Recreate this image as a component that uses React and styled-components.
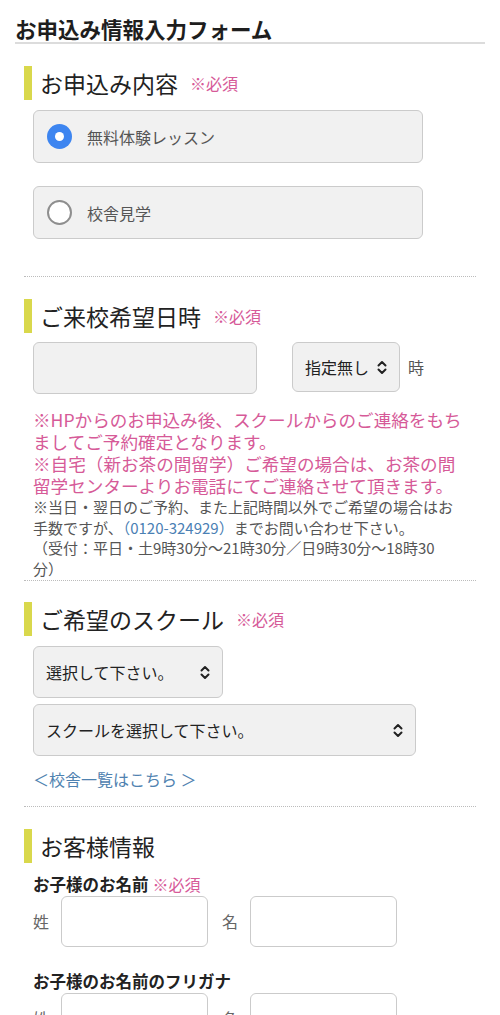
import styled, { createGlobalStyle } from "styled-components"

const GlobalStyle = createGlobalStyle`
  html, body {
    margin: 0;
    padding: 0;
    background: #fff;
  }
  body {
    font-family: "Noto Sans CJK JP", "Noto Sans", sans-serif;
    color: #333;
  }
`

const PINK = "#d65a98"

const Page = styled.div`
  width: 500px;
  padding-bottom: 40px;
`
const Title = styled.h1`
  margin: 0 15px;
  padding-top: 16px;
  font-size: 21.5px;
  line-height: 26px;
  font-weight: 700;
  color: #1e1e1e;
  border-bottom: 2px solid #dcdcdc;
`
const Sections = styled.div`
  padding: 0 24px;
`
const Section = styled.section`
  padding: ${p => p.$top}px 0 ${p => p.$bottom}px;
  border-bottom: ${p => (p.$last ? "none" : "1px dotted #bcbcbc")};
`
const Heading = styled.h2`
  margin: 0;
  display: flex;
  align-items: center;
  height: 34px;
  border-left: 8px solid #d9d84c;
  padding-left: 8px;
  font-size: 23px;
  font-weight: 400;
  color: #222;
`
const Required = styled.span`
  margin-left: 12px;
  font-size: 16px;
  color: ${PINK};
`
const Body = styled.div`
  padding-left: 9px;
  margin-top: ${p => p.$top || 0}px;
`
const RadioBox = styled.label`
  display: flex;
  align-items: center;
  box-sizing: border-box;
  width: 390px;
  height: 53px;
  margin-bottom: ${p => p.$gap || 0}px;
  padding-left: 13px;
  background: #f1f1f1;
  border: 1.5px solid #cbcbcb;
  border-radius: 6px;
  font-size: 16px;
  color: #555;
`
const RadioDot = styled.span`
  box-sizing: border-box;
  width: 25px;
  height: 25px;
  margin-right: 15px;
  border-radius: 50%;
  background: ${p => (p.$on ? "#3d85f0" : "#fff")};
  border: ${p => (p.$on ? "none" : "2px solid #8e8e8e")};
  display: flex;
  align-items: center;
  justify-content: center;
  &::after {
    content: "";
    display: ${p => (p.$on ? "block" : "none")};
    width: 9px;
    height: 9px;
    border-radius: 50%;
    background: #fff;
  }
`
const Row = styled.div`
  display: flex;
  align-items: flex-start;
  margin-top: ${p => p.$top || 0}px;
`
const TextBox = styled.div`
  box-sizing: border-box;
  width: ${p => p.$w}px;
  height: ${p => p.$h || 52}px;
  background: ${p => (p.$white ? "#fff" : "#f1f1f1")};
  border: 1.5px solid #cbcbcb;
  border-radius: 6px;
`
const Select = styled.div`
  box-sizing: border-box;
  display: flex;
  align-items: center;
  justify-content: space-between;
  width: ${p => p.$w}px;
  height: ${p => p.$h || 52}px;
  margin-left: ${p => p.$ml || 0}px;
  padding: 0 12px 0 12px;
  background: #f1f1f1;
  border: 1.5px solid #cbcbcb;
  border-radius: 6px;
  font-size: 16px;
  color: #222;
`
const Unit = styled.span`
  margin-left: 8px;
  font-size: 16px;
  color: #555;
  line-height: 50px;
`
const Notes = styled.div`
  margin-top: 15px;
  white-space: nowrap;
`
const PinkNote = styled.p`
  margin: 0;
  font-size: 17.6px;
  line-height: 22px;
  color: ${PINK};
`
const GrayNote = styled.p`
  margin: 0;
  font-size: 15px;
  line-height: 20.5px;
  color: #555;
`
const Phone = styled.span`
  color: #4a80b4;
`
const Link = styled.a`
  display: block;
  margin-top: 12px;
  font-size: 16px;
  line-height: 22px;
  color: #4f82b0;
  text-decoration: none;
`
const FieldLabel = styled.div`
  margin-top: ${p => p.$top}px;
  font-size: 16.5px;
  line-height: 22px;
  font-weight: 700;
  color: #222;
  ${Required} {
    margin-left: 4px;
    font-weight: 400;
  }
`
const NameTag = styled.span`
  width: ${p => p.$w}px;
  font-size: 16px;
  color: #666;
  line-height: 51px;
  margin-left: ${p => p.$ml || 0}px;
`

function Chevron() {
  return (
    <svg width="10" height="15" viewBox="0 0 10 15" fill="none" stroke="#222" strokeWidth="2" strokeLinecap="round" strokeLinejoin="round">
      <path d="M1.5 5.5 L5 2 L8.5 5.5" />
      <path d="M1.5 9.5 L5 13 L8.5 9.5" />
    </svg>
  )
}

function NameRow({ top }) {
  return (
    <Row $top={top}>
      <NameTag $w={28}>姓</NameTag>
      <TextBox $w={147} $h={51} $white />
      <NameTag $w={28} $ml={14}>名</NameTag>
      <TextBox $w={147} $h={51} $white />
    </Row>
  )
}

export default function App() {
  return (
    <Page>
      <GlobalStyle />
      <Title>お申込み情報入力フォーム</Title>
      <Sections>
        <Section $top={22} $bottom={37}>
          <Heading>お申込み内容<Required>※必須</Required></Heading>
          <Body $top={10}>
            <RadioBox $gap={23}><RadioDot $on />無料体験レッスン</RadioBox>
            <RadioBox><RadioDot />校舎見学</RadioBox>
          </Body>
        </Section>

        <Section $top={22} $bottom={1}>
          <Heading>ご来校希望日時<Required>※必須</Required></Heading>
          <Body>
            <Row $top={9}>
              <TextBox $w={224} />
              <Select $w={108} $h={50} $ml={35}>指定無し<Chevron /></Select>
              <Unit>時</Unit>
            </Row>
            <Notes>
              <PinkNote>※HPからのお申込み後、スクールからのご連絡をもち<br />ましてご予約確定となります。</PinkNote>
              <PinkNote>※自宅（新お茶の間留学）ご希望の場合は、お茶の間<br />留学センターよりお電話にてご連絡させて頂きます。</PinkNote>
              <GrayNote>
                ※当日・翌日のご予約、また上記時間以外でご希望の場合はお<br />
                手数ですが、<Phone>（0120-324929）</Phone>までお問い合わせ下さい。<br />
                （受付：平日・土9時30分～21時30分／日9時30分～18時30<br />
                分）
              </GrayNote>
            </Notes>
          </Body>
        </Section>

        <Section $top={21} $bottom={16}>
          <Heading>ご希望のスクール<Required>※必須</Required></Heading>
          <Body $top={10}>
            <Select $w={190}>選択して下さい。<Chevron /></Select>
            <Row $top={6}>
              <Select $w={383}>スクールを選択して下さい。<Chevron /></Select>
            </Row>
            <Link href="#">＜校舎一覧はこちら ＞</Link>
          </Body>
        </Section>

        <Section $top={22} $bottom={0} $last>
          <Heading>お客様情報</Heading>
          <Body>
            <FieldLabel $top={10}>お子様のお名前<Required>※必須</Required></FieldLabel>
            <NameRow top={1} />
            <FieldLabel $top={23}>お子様のお名前のフリガナ</FieldLabel>
            <NameRow top={1} />
          </Body>
        </Section>
      </Sections>
    </Page>
  )
}
